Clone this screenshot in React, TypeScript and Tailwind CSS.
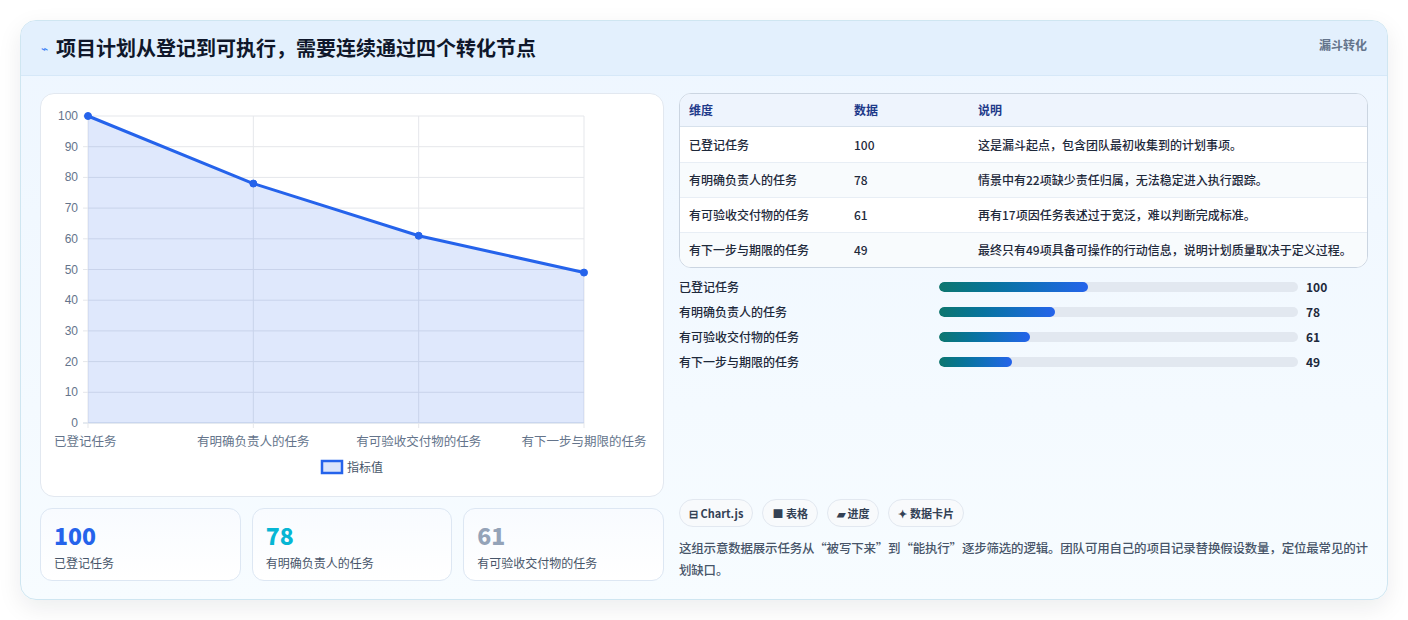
const FONT = { fontFamily: '"Noto Sans CJK SC", "Noto Sans", sans-serif' }

const ROWS = [
  { name: "已登记任务", value: 100, note: "这是漏斗起点，包含团队最初收集到的计划事项。" },
  { name: "有明确负责人的任务", value: 78, note: "情景中有22项缺少责任归属，无法稳定进入执行跟踪。" },
  { name: "有可验收交付物的任务", value: 61, note: "再有17项因任务表述过于宽泛，难以判断完成标准。" },
  { name: "有下一步与期限的任务", value: 49, note: "最终只有49项具备可操作的行动信息，说明计划质量取决于定义过程。" },
]

function Chart() {
  const x0 = 47, x1 = 543, y0 = 22, y1 = 329
  const xs = [0, 1, 2, 3].map((i) => x0 + ((x1 - x0) / 3) * i)
  const yOf = (v: number) => y1 - ((y1 - y0) * v) / 100
  const pts = ROWS.map((r, i) => `${xs[i]},${yOf(r.value)}`).join(" ")
  return (
    <svg width="623" height="403" className="block">
      {[0, 10, 20, 30, 40, 50, 60, 70, 80, 90, 100].map((v) => (
        <g key={v}>
          <line x1={x0 - 5} x2={x1} y1={yOf(v)} y2={yOf(v)} stroke={v === 0 ? "#cbd5e1" : "#e5e7eb"} />
          <text x={37} y={yOf(v) + 4} textAnchor="end" fontSize="12" fill="#64748b" fontFamily="Liberation Sans, sans-serif">{v}</text>
        </g>
      ))}
      {xs.map((x, i) => (
        <line key={i} x1={x} x2={x} y1={y0} y2={y1 + 5} stroke="#e5e7eb" />
      ))}
      <polygon points={`${x0},${y1} ${pts} ${x1},${y1}`} fill="rgba(37,99,235,0.15)" />
      <polyline points={pts} fill="none" stroke="#2563eb" strokeWidth="3" />
      {ROWS.map((r, i) => (
        <circle key={i} cx={xs[i]} cy={yOf(r.value)} r="3.5" fill="#2563eb" stroke="#2563eb" strokeWidth="1" />
      ))}
      {ROWS.map((r, i) => (
        <text key={i} x={i === 0 ? 13 : xs[i]} y={352} textAnchor={i === 0 ? "start" : "middle"} fontSize="12.5" fill="#64748b" style={FONT}>{r.name}</text>
      ))}
      <rect x="281" y="367" width="20" height="12" fill="#dbe5fb" stroke="#2563eb" strokeWidth="2.5" />
      <text x="306" y="378" fontSize="12" fill="#475569" style={FONT}>指标值</text>
    </svg>
  )
}

export default function App() {
  const stats = [
    { v: 100, c: "text-[#2563eb]", l: "已登记任务" },
    { v: 78, c: "text-[#06b6d4]", l: "有明确负责人的任务" },
    { v: 61, c: "text-[#94a3b8]", l: "有可验收交付物的任务" },
  ]
  return (
    <div className="w-[1408px] h-[620px] bg-white pt-[20px] px-[20px]" style={FONT}>
      <div className="h-[580px] rounded-[16px] border border-[#cfe6f1] bg-gradient-to-b from-[#eef6ff] to-[#f7fcff] shadow-[0_8px_24px_rgba(15,23,42,0.08)] overflow-hidden flex flex-col">
        <div className="h-[55px] shrink-0 bg-[#e3f0fd] border-b border-[#d6e8f8] flex items-center justify-between px-[20px]">
          <div className="flex items-center gap-[8px]">
            <span className="text-[#3b82f6] text-[12px]">⌁</span>
            <h1 className="text-[20px] font-bold text-[#0f172a]">项目计划从登记到可执行，需要连续通过四个转化节点</h1>
          </div>
          <span className="text-[12px] font-bold text-[#64748b] self-start mt-[15px]">漏斗转化</span>
        </div>
        <div className="flex gap-[15px] px-[19px] pt-[17px] flex-1">
          <div className="w-[624px] flex flex-col gap-[11px]">
            <div className="h-[404px] rounded-[14px] border border-[#e2e8f0] bg-white overflow-hidden">
              <Chart />
            </div>
            <div className="grid grid-cols-3 gap-[11px]">
              {stats.map((s) => (
                <div key={s.l} className="h-[73px] rounded-[12px] border border-[#dde7f3] bg-gradient-to-b from-[#f8fbff] to-white px-[13px] pt-[12px]">
                  <div className={`text-[23px] leading-[28px] font-extrabold ${s.c}`}>{s.v}</div>
                  <div className="text-[12px] text-[#475569] mt-[5px]">{s.l}</div>
                </div>
              ))}
            </div>
          </div>
          <div className="flex-1 flex flex-col pb-[18px]">
            <div className="rounded-[12px] border border-[#cbd5e1] bg-white overflow-hidden text-[12px]">
              <div className="grid grid-cols-[165px_124px_1fr] h-[33px] items-center px-[9px] bg-[#eef4fd] border-b border-[#d7e1ec] font-bold text-[#1e3a8a]">
                <span>维度</span><span>数据</span><span>说明</span>
              </div>
              {ROWS.map((r, i) => (
                <div key={r.name} className={`grid grid-cols-[165px_124px_1fr] h-[35px] items-center px-[9px] font-medium text-[#1e293b] ${i ? "border-t border-[#e8eef5]" : ""} ${i % 2 ? "bg-[#f8fbfd]" : "bg-white"}`}>
                  <span>{r.name}</span><span>{r.value}</span><span>{r.note}</span>
                </div>
              ))}
            </div>
            <div className="flex flex-col gap-[8px] mt-[10px]">
              {ROWS.map((r) => (
                <div key={r.name} className="flex items-center h-[17px] text-[12px] font-medium text-[#1e293b]">
                  <span className="w-[260px]">{r.name}</span>
                  <div className="w-[359px] h-[10px] rounded-full bg-[#e2e8f0] overflow-hidden">
                    <div className="h-full rounded-full bg-gradient-to-r from-[#0f766e] to-[#2563eb]" style={{ width: `${r.value * 0.415}%` }} />
                  </div>
                  <span className="ml-[8px] font-bold">{r.value}</span>
                </div>
              ))}
            </div>
            <div className="mt-auto">
              <div className="flex gap-[9px]">
                {["⊟ Chart.js", "■ 表格", "▰ 进度", "✦ 数据卡片"].map((t) => (
                  <span key={t} className="h-[28px] px-[9px] rounded-full border border-[#e2e8f0] bg-[#f8fafc] flex items-center text-[11px] font-bold text-[#334155]">{t}</span>
                ))}
              </div>
              <p className="mt-[10px] text-[12.5px] leading-[22px] font-medium text-[#475569] tracking-[-0.2px]">这组示意数据展示任务从“被写下来”到“能执行”逐步筛选的逻辑。团队可用自己的项目记录替换假设数量，定位最常见的计划缺口。</p>
            </div>
          </div>
        </div>
      </div>
    </div>
  )
}
